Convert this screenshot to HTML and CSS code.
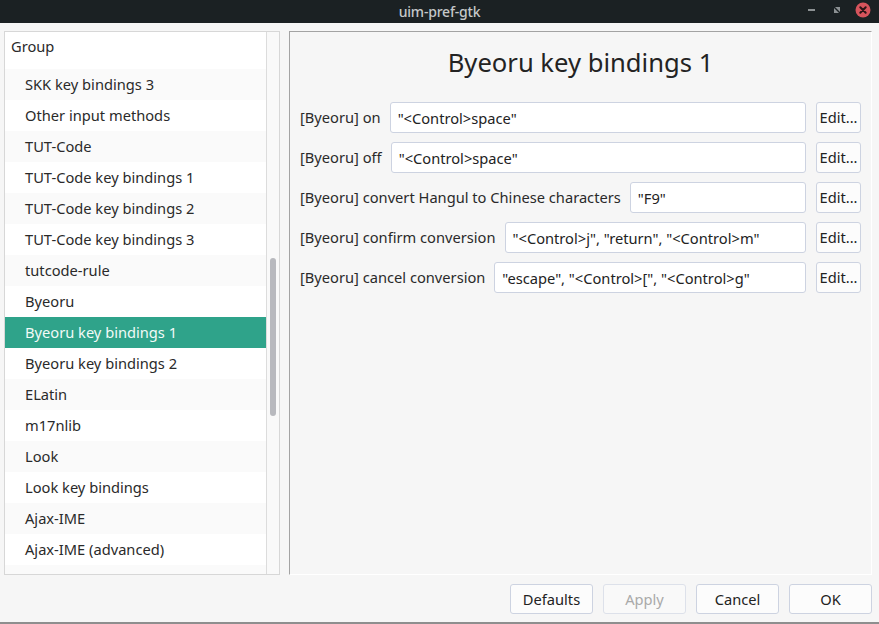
FILE: index.html
```html
<!DOCTYPE html>
<html>
<head>
<meta charset="utf-8">
<link rel="stylesheet" href="styles.css">
</head>
<body>
<div class="window">
  <div class="titlebar">
    <span class="title">uim-pref-gtk</span>
    <div class="controls">
      <svg class="ctl" width="14" height="14" viewBox="0 0 14 14"><rect x="3" y="6" width="7" height="2" fill="#8c9193"/></svg>
      <svg class="ctl" width="14" height="14" viewBox="0 0 14 14"><path d="M5 4 L10 4 L10 9 Z" fill="#8c9193"/><path d="M4 5 L4 10 L9 10 Z" fill="#8c9193"/></svg>
      <svg class="ctl" width="16" height="16" viewBox="0 0 16 16"><circle cx="8" cy="8" r="7.5" fill="#d6545c"/><path d="M5.3 5.3 L10.7 10.7 M10.7 5.3 L5.3 10.7" stroke="#2a1416" stroke-width="2" stroke-linecap="round"/></svg>
    </div>
  </div>
  <div class="main">
    <div class="tree">
      <div class="list">
        <div class="header">Group</div>
        <div class="rows">
          <div class="rowsinner">
            <div class="row">SKK key bindings 2</div>
            <div class="row alt">SKK key bindings 3</div>
            <div class="row">Other input methods</div>
            <div class="row alt">TUT-Code</div>
            <div class="row">TUT-Code key bindings 1</div>
            <div class="row alt">TUT-Code key bindings 2</div>
            <div class="row">TUT-Code key bindings 3</div>
            <div class="row alt">tutcode-rule</div>
            <div class="row">Byeoru</div>
            <div class="row sel">Byeoru key bindings 1</div>
            <div class="row">Byeoru key bindings 2</div>
            <div class="row alt">ELatin</div>
            <div class="row">m17nlib</div>
            <div class="row alt">Look</div>
            <div class="row">Look key bindings</div>
            <div class="row alt">Ajax-IME</div>
            <div class="row">Ajax-IME (advanced)</div>
            <div class="row alt"></div>
          </div>
        </div>
      </div>
      <div class="scroll"><div class="thumb"></div></div>
    </div>
    <div class="pane">
      <div class="heading">Byeoru key bindings 1</div>
      <div class="form">
        <div class="frow"><span class="label">[Byeoru] on</span><div class="entry">"&lt;Control&gt;space"</div><div class="edit">Edit...</div></div>
        <div class="frow"><span class="label">[Byeoru] off</span><div class="entry">"&lt;Control&gt;space"</div><div class="edit">Edit...</div></div>
        <div class="frow"><span class="label">[Byeoru] convert Hangul to Chinese characters</span><div class="entry">"F9"</div><div class="edit">Edit...</div></div>
        <div class="frow"><span class="label">[Byeoru] confirm conversion</span><div class="entry">"&lt;Control&gt;j", "return", "&lt;Control&gt;m"</div><div class="edit">Edit...</div></div>
        <div class="frow"><span class="label">[Byeoru] cancel conversion</span><div class="entry">"escape", "&lt;Control&gt;[", "&lt;Control&gt;g"</div><div class="edit">Edit...</div></div>
      </div>
    </div>
  </div>
  <div class="footer">
    <div class="btn">Defaults</div>
    <div class="btn disabled">Apply</div>
    <div class="btn">Cancel</div>
    <div class="btn">OK</div>
  </div>
</div>
</body>
</html>
```

FILE: styles.css
```css
html, body {
  margin: 0;
  padding: 0;
}
body {
  width: 879px;
  height: 624px;
  overflow: hidden;
  background: #f6f6f6;
  font-family: "Noto Sans", "Open Sans", sans-serif;
  font-size: 14.67px;
  color: #2a2a2a;
}
.window {
  width: 879px;
  height: 624px;
  box-sizing: border-box;
  border-bottom: 2px solid #8e8e8e;
  display: flex;
  flex-direction: column;
}
.titlebar {
  height: 23px;
  background: #1b2123;
  position: relative;
  display: flex;
  align-items: center;
  justify-content: center;
}
.title {
  color: #c5c8c9;
  font-size: 14px;
  font-weight: 500;
  letter-spacing: -0.2px;
}
.controls {
  position: absolute;
  right: 8px;
  top: 2px;
  display: flex;
  align-items: center;
  gap: 11px;
}
.ctl {
  display: block;
}
.main {
  display: flex;
  padding: 8px 7px 0 4px;
  gap: 9px;
  height: 544px;
}
.tree {
  width: 274px;
  border: 1px solid #d7d7d7;
  background: #ffffff;
  display: flex;
}
.list {
  flex: 1;
  display: flex;
  flex-direction: column;
  overflow: hidden;
}
.header {
  height: 31px;
  line-height: 29px;
  padding-left: 6px;
  color: #2a2a2a;
  flex: none;
}
.rows {
  flex: 1;
  overflow: hidden;
}
.rowsinner {
  margin-top: -25px;
}
.row {
  height: 31px;
  line-height: 31px;
  padding-left: 20px;
  white-space: nowrap;
  background: #ffffff;
}
.row.alt {
  background: #fafafa;
}
.row.sel {
  background: #2fa38a;
  color: #f2faf7;
}
.scroll {
  width: 12px;
  border-left: 1px solid #dcdcdc;
  background: #f9f9f9;
  position: relative;
}
.thumb {
  position: absolute;
  left: 3px;
  top: 226px;
  width: 6px;
  height: 158px;
  border-radius: 3px;
  background: #b8b9be;
}
.pane {
  flex: 1;
  border-top: 1px solid #a3a3a3;
  border-left: 1px solid #a3a3a3;
  border-right: 1px solid #ffffff;
  border-bottom: 1px solid #ffffff;
  padding: 14px 10px 0 10px;
}
.heading {
  text-align: center;
  font-size: 25.6px;
  line-height: 34px;
  color: #232323;
  margin-bottom: 22px;
}
.form {
  display: flex;
  flex-direction: column;
  gap: 9px;
}
.frow {
  display: flex;
  align-items: center;
  height: 31px;
}
.label {
  white-space: nowrap;
  margin-right: 9px;
  padding-bottom: 2px;
}
.entry {
  flex: 1;
  height: 31px;
  box-sizing: border-box;
  border: 1px solid #cdd3e1;
  border-radius: 3px;
  background: #ffffff;
  line-height: 30px;
  padding: 0 7px;
  white-space: nowrap;
  color: #222;
}
.edit {
  margin-left: 10px;
  width: 45px;
  height: 31px;
  box-sizing: border-box;
  border: 1px solid #cdd3e1;
  border-radius: 3px;
  background: #fcfcfc;
  line-height: 29px;
  text-align: center;
  color: #222;
}
.footer {
  display: flex;
  justify-content: flex-end;
  gap: 10px;
  padding: 9px 7px 0 0;
}
.btn {
  width: 83px;
  height: 30px;
  box-sizing: border-box;
  border: 1px solid #cdd3e1;
  border-radius: 3px;
  background: #fcfcfc;
  text-align: center;
  line-height: 29px;
  color: #222;
}
.btn.disabled {
  color: #a9a9a9;
  border-color: #dde1ea;
  background: #f9f9f9;
}
```
